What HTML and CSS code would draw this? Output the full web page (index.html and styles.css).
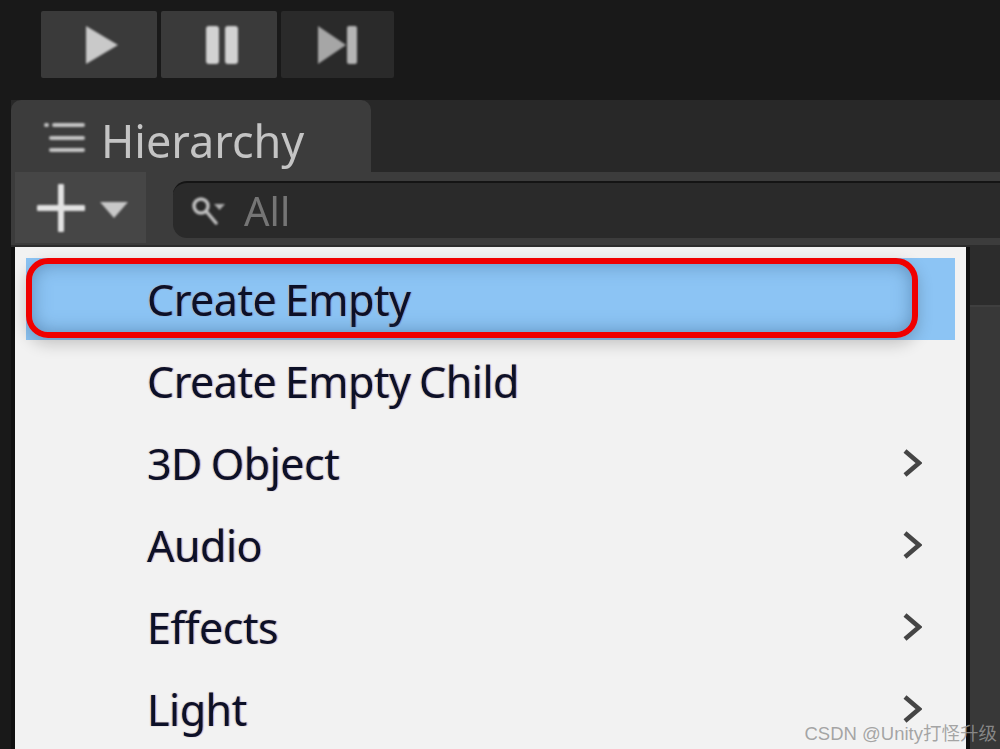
FILE: index.html
```html
<!DOCTYPE html>
<html lang="en">
<head>
<meta charset="utf-8">
<title>Hierarchy</title>
<link rel="stylesheet" href="styles.css">
</head>
<body>
<div class="page">
  <div class="toolbar">
    <div class="play-btn shift"><svg class="icon" width="36" height="44" viewBox="0 0 36 44"><path d="M2 3 L34 22 L2 41 Z" fill="#c9c9c9"/></svg></div>
    <div class="play-btn shift"><svg class="icon" width="36" height="44" viewBox="0 0 36 44"><rect x="2" y="3" width="13" height="38" rx="3" fill="#d2d2d2"/><rect x="21" y="3" width="13" height="38" rx="3" fill="#d2d2d2"/></svg></div>
    <div class="play-btn dim"><svg class="icon" width="44" height="44" viewBox="0 0 44 44"><path d="M2 3 L30 22 L2 41 Z" fill="#a6a6a6"/><rect x="31" y="3" width="10" height="38" rx="2" fill="#b4b4b4"/></svg></div>
  </div>
  <div class="panel">
    <div class="tabs">
      <div class="tab">
        <svg class="icon tab-icon" width="42" height="34" viewBox="0 0 42 34"><g fill="none" stroke="#c4c4c4" stroke-width="4" stroke-linecap="round"><path d="M3 4h1M11 4h29M10 17h30M10 29h30"/><path d="M8 17h1M8 29h1"/></g></svg>
        <span class="tab-label">Hierarchy</span>
      </div>
    </div>
    <div class="tools">
      <div class="add-btn">
        <svg class="icon" width="48" height="48" viewBox="0 0 48 48"><path d="M24 2V46M2 24H46" stroke="#e2e2e2" stroke-width="6" stroke-linecap="round"/></svg>
        <svg class="icon add-caret" width="30" height="18" viewBox="0 0 30 18"><path d="M1 1H29L15 17Z" fill="#c8c8c8"/></svg>
      </div>
      <div class="search">
        <svg class="icon" width="36" height="32" viewBox="0 0 36 32"><g fill="none" stroke="#c0c0c0" stroke-width="3.5"><circle cx="11" cy="11" r="7"/><path d="M16 16L26 28" stroke-linecap="round"/></g><path d="M24 9H35L29.500 15Z" fill="#b0b0b0"/></svg>
        <span class="search-text">All</span>
      </div>
    </div>
    <div class="subrow"></div>
    <div class="body-area"></div>
  </div>

  <div class="menu">
    <div class="item active"><span class="label">Create Empty</span></div>
    <div class="item"><span class="label">Create Empty Child</span></div>
    <div class="item"><span class="label">3D Object</span><svg class="chev" width="20" height="30" viewBox="0 0 20 30"><path d="M3 3L17 15L3 27" fill="none" stroke="#454545" stroke-width="4.500"/></svg></div>
    <div class="item"><span class="label">Audio</span><svg class="chev" width="20" height="30" viewBox="0 0 20 30"><path d="M3 3L17 15L3 27" fill="none" stroke="#454545" stroke-width="4.500"/></svg></div>
    <div class="item"><span class="label">Effects</span><svg class="chev" width="20" height="30" viewBox="0 0 20 30"><path d="M3 3L17 15L3 27" fill="none" stroke="#454545" stroke-width="4.500"/></svg></div>
    <div class="item"><span class="label">Light</span><svg class="chev" width="20" height="30" viewBox="0 0 20 30"><path d="M3 3L17 15L3 27" fill="none" stroke="#454545" stroke-width="4.500"/></svg></div>
    <div class="callout"></div>
  </div>
  <div class="watermark">CSDN @Unity打怪升级</div>
</div>
</body>
</html>
```
FILE: styles.css
```css
html, body {
  margin: 0;
  padding: 0;
  height: 100%;
  overflow: hidden;
  background: #191919;
}
.page {
  position: relative;
  width: 1000px;
  height: 749px;
  overflow: hidden;
  font-family: "Noto Sans", "Open Sans", sans-serif;
}
.icon { filter: blur(0.9px); flex: none; }

.toolbar {
  display: flex;
  gap: 4px;
  padding: 11px 0 0 41px;
  height: 100px;
  box-sizing: border-box;
}
.play-btn {
  width: 116px;
  height: 67px;
  background: #3a3a3a;
  display: flex;
  align-items: center;
  justify-content: center;
  border-radius: 2px;
  box-sizing: border-box;
}
.play-btn.shift { padding-left: 5px; }
.play-btn.dim { background: #2a2a2a; width: 113px; }

.panel { padding-left: 11px; }
.tabs {
  height: 72px;
  background: #282828;
  display: flex;
}
.tab {
  width: 360px;
  height: 72px;
  background: #3c3c3c;
  border-radius: 10px 10px 0 0;
  display: flex;
  align-items: center;
  gap: 16px;
  padding-left: 32px;
  box-sizing: border-box;
}
.tab-icon { margin-top: 3px; }
.tab-label {
  font-size: 45px;
  padding-top: 9px;
  color: #c4c4c4;
  filter: blur(0.7px);
}
.tools {
  height: 73px;
  background: #3c3c3c;
  display: flex;
  align-items: flex-start;
  gap: 27px;
  padding-left: 4px;
}
.add-btn {
  width: 131px;
  height: 71px;
  background: #464646;
  display: flex;
  align-items: center;
  gap: 14px;
  padding-left: 22px;
  box-sizing: border-box;
}
.add-caret { margin-top: 4px; }
.search {
  flex: 1;
  margin-top: 9px;
  height: 57px;
  background: #2a2a2a;
  border-top: 2px solid #141414;
  box-sizing: border-box;
  border-radius: 14px 0 0 14px;
  display: flex;
  align-items: center;
  gap: 18px;
  padding-left: 17px;
}
.search-text {
  font-size: 40px;
  color: #757575;
  filter: blur(0.7px);
}
.subrow {
  height: 60px;
  background: #2c2c2c;
  border-bottom: 2px solid #3f3f3f;
}
.body-area {
  height: 460px;
  background: #383838;
}

.menu {
  position: absolute;
  left: 15px;
  top: 247px;
  width: 955px;
  height: 520px;
  background: #f2f2f2;
  border-right: 4px solid #101010;
  box-shadow: -4px 0 0 #101010;
  padding: 11px 0 0 11px;
  box-sizing: border-box;
}
.item {
  width: 929px;
  height: 82px;
  display: flex;
  align-items: center;
  justify-content: space-between;
  padding: 0 33px 0 121px;
  box-sizing: border-box;
}
.item.active { background: #8cc4f4; }
.label {
  font-size: 43px;
  word-spacing: -2px;
  letter-spacing: -0.5px;
  color: #0c1028;
  filter: blur(0.5px);
  text-shadow: -1px 0 1px rgba(230, 150, 60, 0.55), 1px 0 1px rgba(50, 70, 210, 0.45);
}
.chev { filter: blur(0.7px); }
.callout {
  position: absolute;
  left: 11px;
  top: 11px;
  width: 892px;
  height: 80px;
  box-sizing: border-box;
  border: 6px solid #f00000;
  border-radius: 22px;
  filter: blur(0.5px);
  box-shadow: 0 6px 16px rgba(0, 0, 0, 0.2), inset 0 0 18px rgba(50, 90, 130, 0.5);
}
.watermark {
  position: absolute;
  right: 3px;
  top: 719px;
  font-family: "Liberation Sans", "Noto Sans CJK SC", sans-serif;
  font-size: 18.500px;
  color: rgba(150, 150, 150, 0.85);
  white-space: nowrap;
}
```
